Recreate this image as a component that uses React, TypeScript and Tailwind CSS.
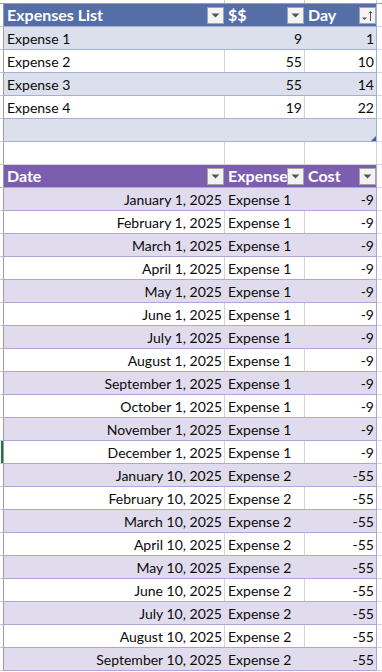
import React from "react";

type Tone = {
  head: string;
  band: string;
  line: string;
};

const blue: Tone = { head: "bg-[#566ea8]", band: "bg-[#dce0ec]", line: "border-[#a3b0d3]" };
const purple: Tone = { head: "bg-[#7b5fae]", band: "bg-[#e0dcee]", line: "border-[#b2a4d8]" };

const months = [
  "January",
  "February",
  "March",
  "April",
  "May",
  "June",
  "July",
  "August",
  "September",
  "October",
  "November",
  "December",
];

const costs = [
  ...months.map((m) => ({ date: `${m} 1, 2025`, name: "Expense 1", cost: -9 })),
  ...months.slice(0, 9).map((m) => ({ date: `${m} 10, 2025`, name: "Expense 2", cost: -55 })),
];

const expenses = [
  { name: "Expense 1", amount: 9, day: 1 },
  { name: "Expense 2", amount: 55, day: 10 },
  { name: "Expense 3", amount: 55, day: 14 },
  { name: "Expense 4", amount: 19, day: 22 },
];

function FilterButton({ sorted }: { sorted?: boolean }) {
  return (
    <div className="absolute right-0 top-[3px] flex h-[17px] w-[17px] items-center justify-center border border-[#a6a6a6] bg-[#f3f3f3]">
      {sorted ? (
        <svg width="13" height="13" viewBox="0 0 13 13">
          <path d="M1 8.5h5l-2.5 2.5z" fill="#555" />
          <path d="M9.5 12V2.5M7.8 4.3l1.7-1.8 1.7 1.8" stroke="#555" strokeWidth="1" fill="none" />
        </svg>
      ) : (
        <svg width="9" height="5" viewBox="0 0 9 5">
          <path d="M0.5 0.5h8l-4 4z" fill="#555" />
        </svg>
      )}
    </div>
  );
}

function Gutter({ active }: { active?: boolean }) {
  return (
    <div className="flex w-[4px] shrink-0 border-r border-b border-r-[#9c9c9c] border-b-[#c8c8c8] bg-white">
      {active && <div className="ml-px w-[2px] bg-[#217346]" />}
    </div>
  );
}

function Cell({
  w,
  align = "left",
  band,
  tone,
  last,
  children,
}: {
  w: string;
  align?: "left" | "right";
  band: boolean;
  tone: Tone;
  last?: boolean;
  children?: React.ReactNode;
}) {
  const side = last ? tone.line : band ? "border-r-transparent" : "border-r-[#d4d4d4]";
  return (
    <div
      className={`${w} flex shrink-0 items-center border-r ${side} ${
        align === "right" ? "justify-end pr-[2px]" : "pl-[3px]"
      }`}
    >
      {children}
    </div>
  );
}

function HeadRow({ tone, labels }: { tone: Tone; labels: string[] }) {
  const widths = ["w-[221px]", "w-[80px]", "w-[72px]"];
  return (
    <div className="flex h-[23px]">
      <Gutter />
      <div className={`flex border-b ${tone.line} ${tone.head}`}>
        {labels.map((l, i) => (
          <div
            key={l}
            className={`${widths[i]} relative flex shrink-0 items-center border-r ${
              i === 2 ? tone.line : "border-r-transparent"
            } pl-[3px] text-[16px] font-bold text-white`}
          >
            {l}
            <FilterButton sorted={l === "Day"} />
          </div>
        ))}
      </div>
      <Blank />
    </div>
  );
}

function Blank() {
  return <div className="h-full flex-1 border-b border-[#d4d4d4] bg-white" />;
}

export default function App() {
  return (
    <div className="h-[672px] w-[382px] overflow-hidden bg-white font-['Lato',_sans-serif] text-[14px] text-[#0a0a0a]">
      <div className="flex h-[4px] border-b border-[#9c9c9c]">
        <div className="w-[4px]" />
        <div className="w-[221px] border-r border-[#c8c8c8]" />
        <div className="w-[80px] border-r border-[#c8c8c8]" />
        <div className="w-[72px] border-r border-[#c8c8c8]" />
      </div>

      <HeadRow tone={blue} labels={["Expenses List", "$$", "Day"]} />
      {expenses.map((e, i) => {
        const band = i % 2 === 0;
        return (
          <div key={e.name} className="flex h-[23px]">
            <Gutter />
            <div className={`flex border-b ${blue.line} ${band ? blue.band : "bg-white"}`}>
              <Cell w="w-[221px]" band={band} tone={blue}>
                {e.name}
              </Cell>
              <Cell w="w-[80px]" align="right" band={band} tone={blue}>
                {e.amount}
              </Cell>
              <Cell w="w-[72px]" align="right" band={band} tone={blue} last>
                {e.day}
              </Cell>
            </div>
            <Blank />
          </div>
        );
      })}
      <div className="flex h-[23px]">
        <Gutter />
        <div className={`relative flex border-b ${blue.line} ${blue.band}`}>
          <Cell w="w-[221px]" band tone={blue} />
          <Cell w="w-[80px]" band tone={blue} />
          <Cell w="w-[72px]" band tone={blue} last />
          <svg className="absolute right-[1px] bottom-0" width="5" height="5" viewBox="0 0 5 5">
            <path d="M5 0v5H0z" fill="#3f5ea8" />
          </svg>
        </div>
        <Blank />
      </div>
      <div className="flex h-[23px]">
        <Gutter />
        <div className="flex border-b border-[#d4d4d4]">
          <div className="w-[221px] border-r border-[#d4d4d4]" />
          <div className="w-[80px] border-r border-[#d4d4d4]" />
          <div className="w-[72px] border-r border-[#d4d4d4]" />
        </div>
        <Blank />
      </div>

      <HeadRow tone={purple} labels={["Date", "Expense", "Cost"]} />
      {costs.map((c, i) => {
        const band = i % 2 === 0;
        return (
          <div key={c.date} className="flex h-[23px]">
            <Gutter active={c.date === "December 1, 2025"} />
            <div className={`flex border-b ${purple.line} ${band ? purple.band : "bg-white"}`}>
              <Cell w="w-[221px]" align="right" band={band} tone={purple}>
                {c.date}
              </Cell>
              <Cell w="w-[80px]" band={band} tone={purple}>
                {c.name}
              </Cell>
              <Cell w="w-[72px]" align="right" band={band} tone={purple} last>
                {c.cost}
              </Cell>
            </div>
            <Blank />
          </div>
        );
      })}
    </div>
  );
}
